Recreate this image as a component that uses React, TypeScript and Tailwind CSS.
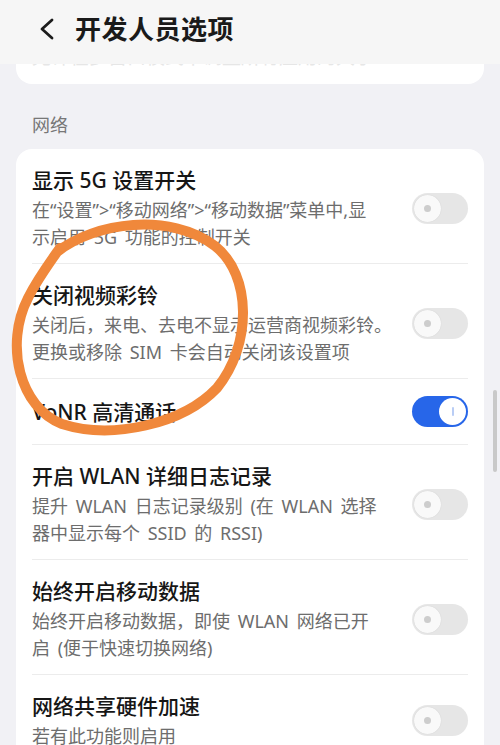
import React from 'react';

interface SettingRow {
  title: string;
  desc?: string[];
  on?: boolean;
}

// description lines are broken where the device breaks them
const rows: SettingRow[] = [
  { title: '显示 5G 设置开关', desc: ['在“设置”>“移动网络”>“移动数据”菜单中,显', '示启用 5G 功能的控制开关'] },
  { title: '关闭视频彩铃', desc: ['关闭后，来电、去电不显示运营商视频彩铃。', '更换或移除 SIM 卡会自动关闭该设置项'] },
  { title: 'VoNR 高清通话', on: true },
  { title: '开启 WLAN 详细日志记录', desc: ['提升 WLAN 日志记录级别 (在 WLAN 选择', '器中显示每个 SSID 的 RSSI)'] },
  { title: '始终开启移动数据', desc: ['始终开启移动数据，即使 WLAN 网络已开', '启 (便于快速切换网络)'] },
  { title: '网络共享硬件加速', desc: ['若有此功能则启用'] },
];

function Toggle({ on }: { on?: boolean }) {
  if (on) {
    return (
      <div className="w-[56px] h-[31px] shrink-0 rounded-full bg-[#2766e9] flex items-center justify-end px-[2px]">
        <div className="w-[27px] h-[27px] rounded-full bg-white flex items-center justify-center">
          <div className="w-[2px] h-[9px] rounded-full bg-[#b9cdf5]" />
        </div>
      </div>
    );
  }
  return (
    <div className="w-[56px] h-[31px] shrink-0 rounded-full bg-[#e6e6e6] flex items-center px-[2px]">
      <div className="w-[27px] h-[27px] rounded-full bg-[#f9f9f9] shadow-[0_0_1px_rgba(0,0,0,0.15)] flex items-center justify-center">
        <div className="w-[7px] h-[7px] rounded-full bg-[#cdcdcd]" />
      </div>
    </div>
  );
}

function Row({ row, last }: { row: SettingRow; last: boolean }) {
  return (
    <div className={last ? '' : 'border-b border-[#ececec]'}>
      <div
        className={
          'flex items-center gap-[14px] ' + (row.desc ? 'pt-[17px] pb-[13px]' : 'h-[65px]')
        }
      >
        <div className="flex-1 min-w-0">
          <div className="text-[21px] leading-[28px] text-[#161616] font-medium">{row.title}</div>
          {row.desc && (
            <div className="mt-[3px] text-[18px] leading-[26.5px] text-[#6d6d6d] [word-spacing:3px]">
              {row.desc.map((line) => (
                <div key={line} className="whitespace-nowrap">{line}</div>
              ))}
            </div>
          )}
        </div>
        <Toggle on={row.on} />
      </div>
    </div>
  );
}

export default function App() {
  return (
    <div
      className="relative w-[500px] h-[745px] overflow-hidden bg-[#f1f1f5]"
      style={{ fontFamily: '"Noto Sans", "Noto Sans CJK SC", sans-serif' }}
    >
      {/* header */}
      <div className="relative z-10 h-[64px] pb-[7px] bg-[#f6f6f6] flex items-center">
        <svg className="ml-[38px] w-[16px] h-[22px]" viewBox="0 0 16 22" fill="none">
          <path d="M14 2 L4 11 L14 20" stroke="#1c1c1c" strokeWidth="2.8" strokeLinecap="round" strokeLinejoin="round" />
        </svg>
        <h1 className="ml-[21px] text-[26px] font-bold text-[#1a1a1a] leading-none tracking-[0.5px]">开发人员选项</h1>
      </div>

      {/* bottom of previous card, mostly scrolled under the header */}
      <div className="mx-4 h-[20px] bg-white rounded-b-2xl overflow-hidden px-4">
        <div className="-mt-[19px] text-[19px] leading-[24px] text-[#e6e6e6]">允许在多窗口模式下调整所有应用的大小</div>
      </div>

      <div className="pt-[29px] pb-[12px] px-8 text-[18px] leading-[24px] text-[#777777]">网络</div>

      <div className="mx-4 bg-white rounded-2xl px-4">
        {rows.map((r, i) => (
          <Row key={r.title} row={r} last={i === rows.length - 1} />
        ))}
      </div>

      {/* scrollbar */}
      <div className="absolute right-[3px] top-[390px] w-[4px] h-[82px] rounded-full bg-[#c9c9c9]" />

      {/* hand-drawn annotation */}
      <svg className="absolute left-0 top-0 pointer-events-none" width="500" height="745" viewBox="0 0 500 745">
        <path
          d="M57 252 C 95 222, 170 212, 215 246 C 252 275, 252 345, 217 388 C 183 424, 112 440, 62 424 C 20 408, 4 345, 28 298 C 37 280, 47 266, 60 248"
          stroke="#f0883b"
          strokeWidth="10"
          fill="none"
          strokeLinecap="round"
          strokeLinejoin="round"
        />
      </svg>
    </div>
  );
}
